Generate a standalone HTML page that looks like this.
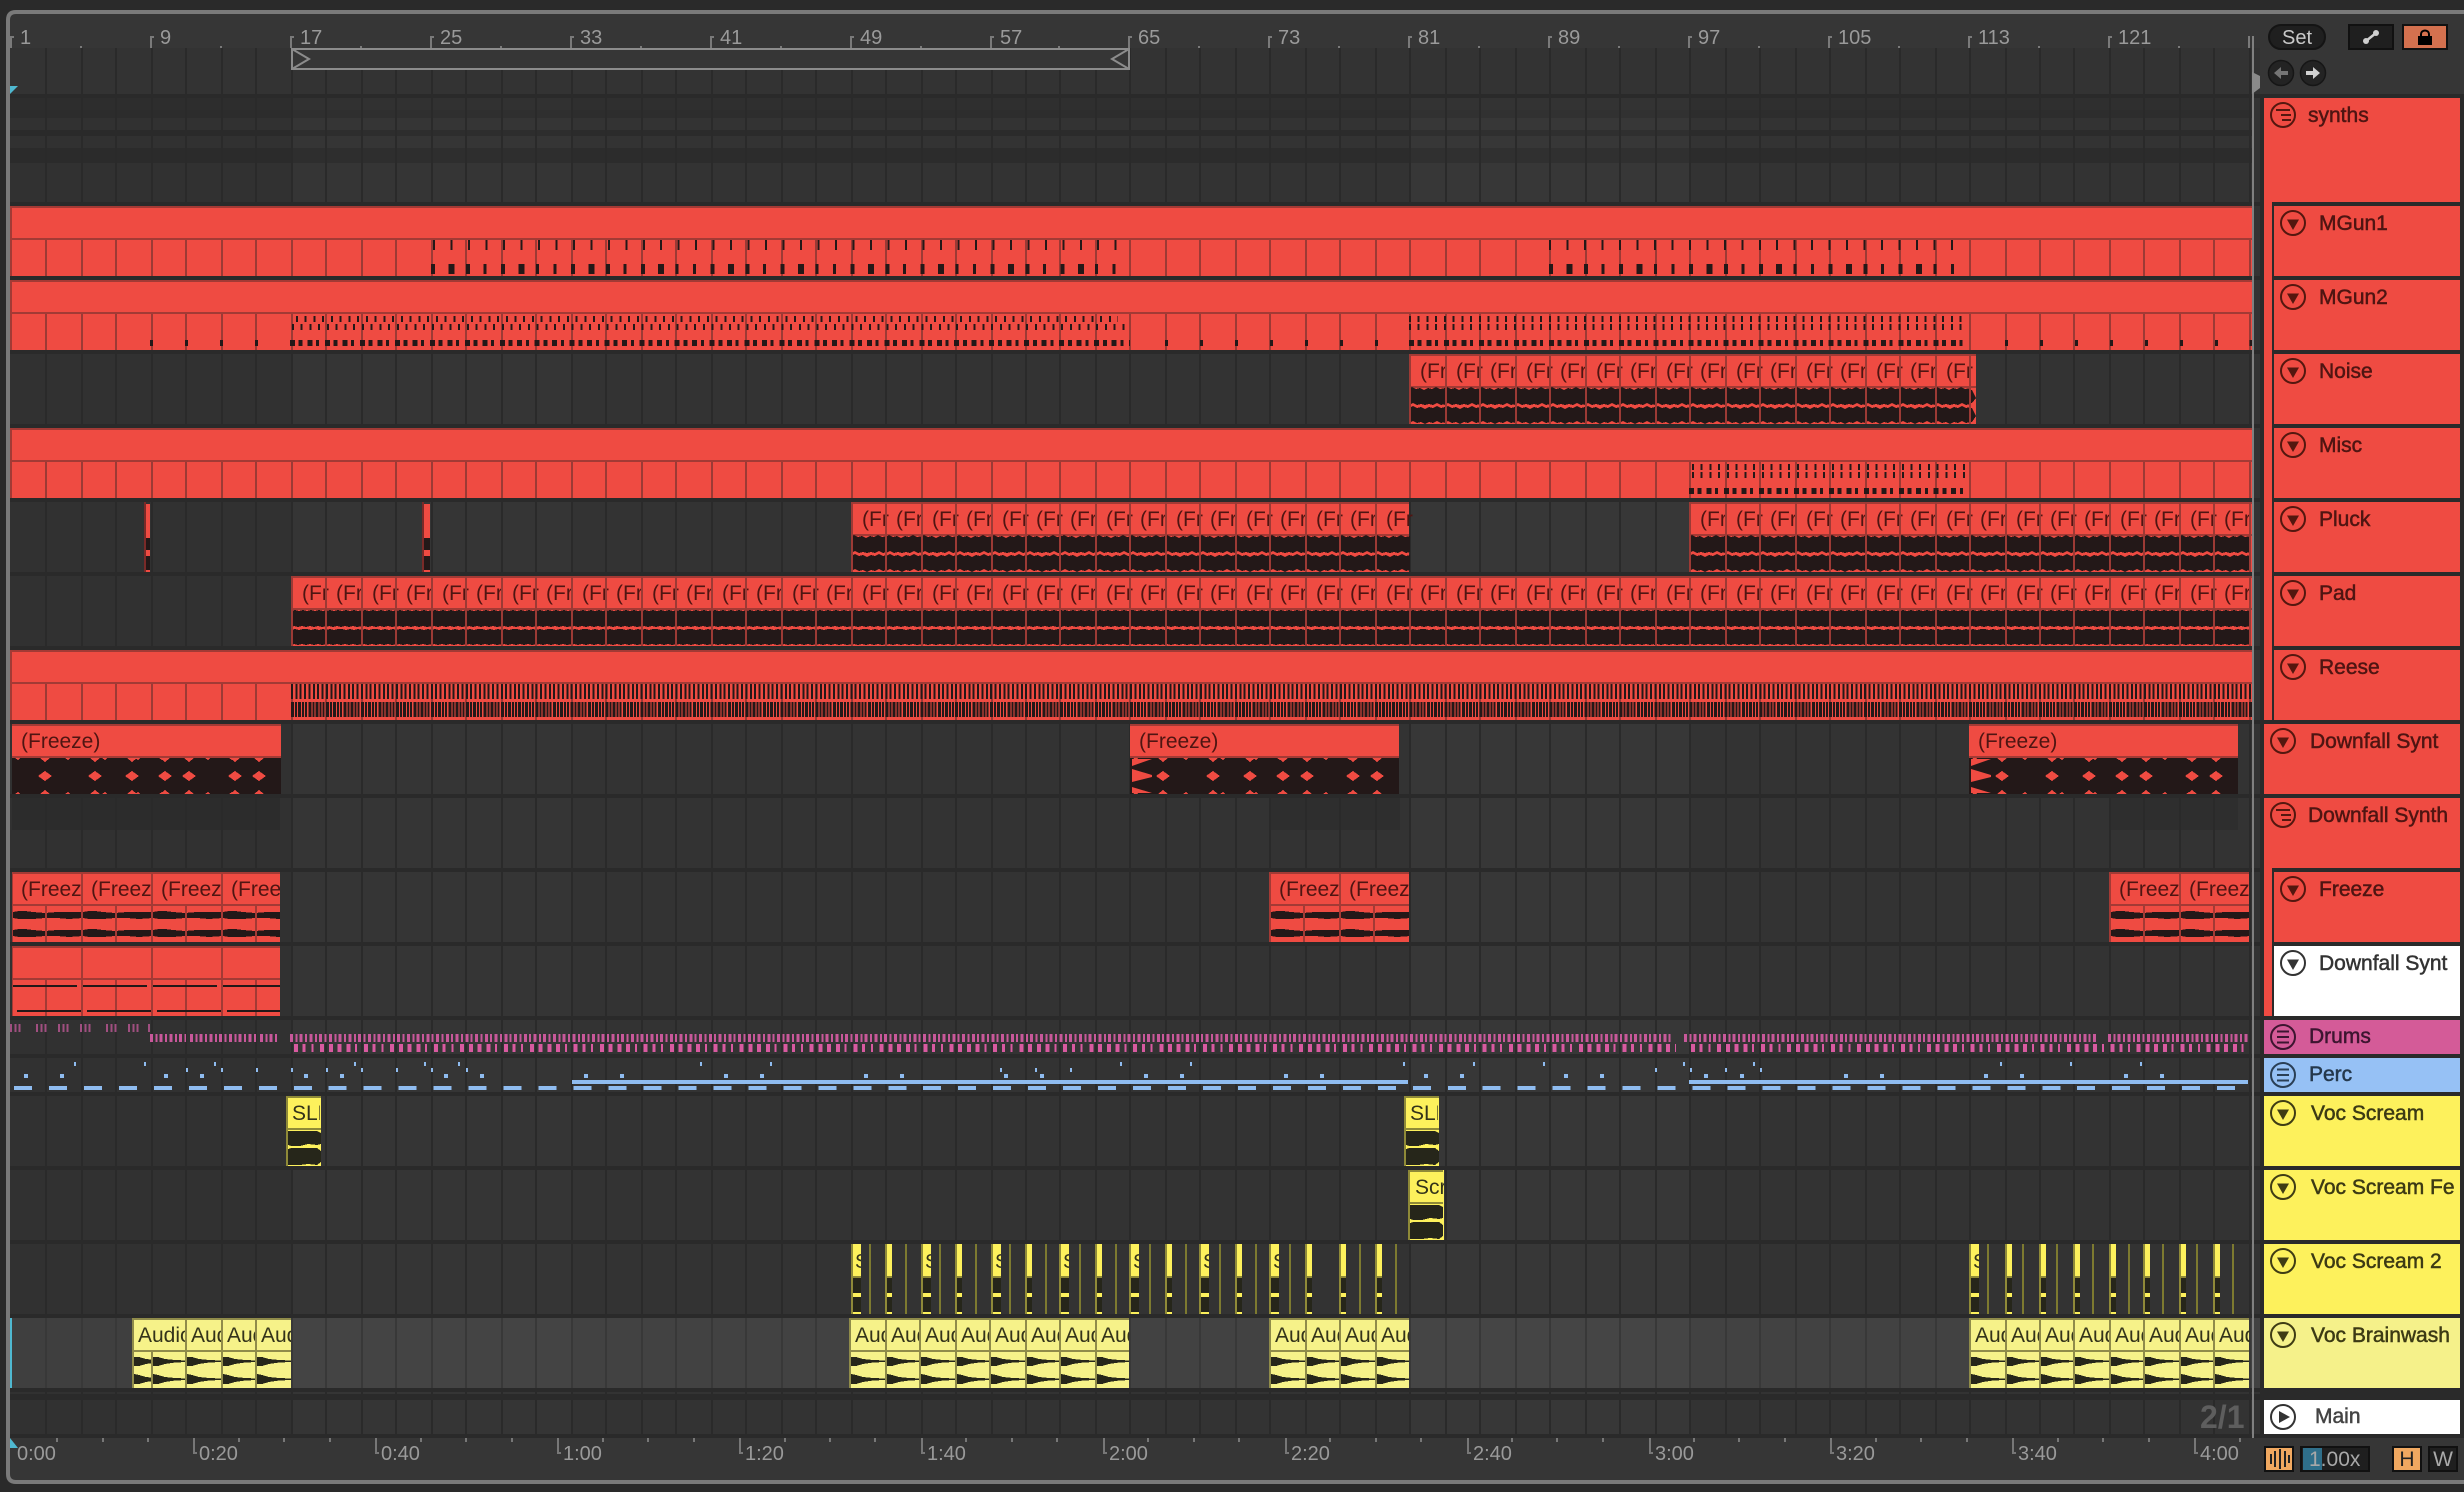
<!DOCTYPE html>
<html><head><meta charset="utf-8"><title>Arrangement</title>
<style>
html,body{margin:0;padding:0;background:#2a2a2a}
svg{display:block}
text{font-family:"Liberation Sans",sans-serif;font-size:20px}
.r{fill:#ef4b42}.rm{fill:#a33a35}
.t text{fill:#4f1512;font-size:21px}
.y text{font-size:21px}
.rl text{fill:#9a9a9a}
.h text{font-size:21px;stroke-width:.5px}
.n{fill:none;stroke:#241818}
.ic{shape-rendering:geometricPrecision}
</style></head><body>
<svg xmlns="http://www.w3.org/2000/svg" width="2464" height="1492" viewBox="0 0 2464 1492" shape-rendering="crispEdges">
<defs>
<path id="gl" fill="none" stroke-width="2" d="M46 48V1434M82 48V1434M116 48V1434M152 48V1434M186 48V1434M222 48V1434M256 48V1434M292 48V1434M326 48V1434M362 48V1434M396 48V1434M432 48V1434M466 48V1434M502 48V1434M536 48V1434M572 48V1434M606 48V1434M642 48V1434M676 48V1434M712 48V1434M746 48V1434M782 48V1434M816 48V1434M852 48V1434M886 48V1434M922 48V1434M956 48V1434M992 48V1434M1026 48V1434M1060 48V1434M1096 48V1434M1130 48V1434M1166 48V1434M1200 48V1434M1236 48V1434M1270 48V1434M1306 48V1434M1340 48V1434M1376 48V1434M1410 48V1434M1446 48V1434M1480 48V1434M1516 48V1434M1550 48V1434M1586 48V1434M1620 48V1434M1656 48V1434M1690 48V1434M1726 48V1434M1760 48V1434M1796 48V1434M1830 48V1434M1866 48V1434M1900 48V1434M1936 48V1434M1970 48V1434M2006 48V1434M2040 48V1434M2074 48V1434M2110 48V1434M2144 48V1434M2180 48V1434M2214 48V1434M2250 48V1434"/>
<clipPath id="cc"><rect x="12" y="240" width="2240" height="36"/><rect x="12" y="314" width="2240" height="36"/><rect x="12" y="462" width="2240" height="36"/><rect x="12" y="684" width="2240" height="36"/><rect x="1409" y="354" width="567" height="70"/><rect x="851" y="502" width="558" height="70"/><rect x="1689" y="502" width="563" height="70"/><rect x="291" y="576" width="1961" height="70"/></clipPath>
<clipPath id="cb"><rect x="12" y="1318" width="2240" height="70"/></clipPath>
<g id="rr"><rect x="12" width="2240" height="70" class="r"/><rect x="10" width="2242" height="2" class="rm"/><rect x="10" width="2" height="70" class="rm"/><rect x="12" y="32" width="2240" height="2" class="rm"/></g>
<path id="w1" fill="#231818" d="M0 35L4 34 8 35 12 34 16 35 20 34 24 35 28 34 32 35 36 34V50L31 51 27 50 23 51 19 50 15 51 11 50 7 51 3 50 0 51ZM0 54L4 53 8 54 12 53 16 53 20 54 24 53 28 54 32 53 36 54V68L31 69 27 68 23 69 19 68 15 69 11 68 7 69 3 68 0 69Z"/>
<g id="p4"><use href="#w1"/><use href="#w1" x="35"/><use href="#w1" x="70"/><use href="#w1" x="105"/></g>
<path id="w2" fill="#231818" d="M0 35L3 33 7 35 11 34 15 36 19 34 23 35 27 33 31 35 36 34V50L32 51 28 49 24 51 20 50 16 51 12 50 8 51 4 49 0 51ZM0 54L4 52 8 54 12 53 16 55 20 53 24 54 28 52 32 54 36 53V68L32 69 28 67 24 69 20 68 16 70 12 68 8 69 4 67 0 69Z"/>
<g id="q4"><use href="#w2"/><use href="#w2" x="35"/><use href="#w2" x="70"/><use href="#w2" x="105"/></g>
<path id="dd" class="r" d="M-7 52L0 47 7 52 0 57ZM-5 34H5L0 38ZM-5 70H5L0 66ZM-30 34H-25L-27 36ZM-30 70H-25L-27 68Z"/>
<g id="fz"><rect width="269" height="70" class="r"/><rect width="269" height="2" class="rm"/><rect y="32" width="269" height="2" class="rm"/><rect y="34" width="269" height="36" fill="#231818"/><use href="#dd" x="33"/><use href="#dd" x="83"/><use href="#dd" x="120"/><use href="#dd" x="153"/><use href="#dd" x="177"/><use href="#dd" x="223"/><use href="#dd" x="247"/></g>
<g id="fc"><rect width="72" height="70" class="r"/><rect width="72" height="2" class="rm"/><rect y="32" width="72" height="2" class="rm"/><rect width="2" height="70" class="rm"/><path fill="#231818" d="M2 40L8 39 14 39 22 40 34 41 46 40 58 40 72 40V46L58 47 46 46 34 46 22 47 14 47 8 47 2 46ZM2 58L8 57 14 57 22 58 34 59 46 58 58 58 72 58V64L58 65 46 64 34 64 22 65 14 65 8 65 2 64Z"/><rect x="34" y="34" width="2" height="36" class="rm"/></g>
<g id="dc"><rect width="72" height="70" class="r"/><rect width="72" height="2" class="rm"/><rect y="32" width="72" height="2" class="rm"/><rect width="2" height="70" class="rm"/><rect x="34" y="34" width="2" height="36" class="rm"/><rect x="2" y="39" width="64" height="2" fill="#231818"/><rect x="6" y="64" width="66" height="2" fill="#231818"/></g>
<g id="au"><rect width="36" height="70" fill="#f6f289"/><rect width="36" height="2" fill="#8f8b4a"/><rect width="2" height="70" fill="#8f8b4a"/><rect y="32" width="36" height="2" fill="#8f8b4a"/><path fill="#26261a" d="M2 39L7 39 14 41 24 42 36 42.5V44L24 44.500 14 46 7 48 2 48ZM2 56L7 57 14 59 24 60 36 60.500V62L24 62.500 14 64 7 66 2 66Z"/></g>
<g id="nw"><rect width="10" height="70" fill="#fdf15c"/><rect width="2" height="70" fill="#8f8a38"/><rect x="2" y="34" width="8" height="15" fill="#26261a"/><rect x="2" y="53" width="8" height="15" fill="#26261a"/><rect x="2" y="32" width="8" height="2" fill="#8f8a38"/></g>
<g id="nn"><rect width="7" height="70" fill="#fdf15c"/><rect width="2" height="70" fill="#8f8a38"/><rect x="2" y="34" width="5" height="15" fill="#26261a"/><rect x="2" y="53" width="5" height="15" fill="#26261a"/><rect x="2" y="32" width="5" height="2" fill="#8f8a38"/></g>
<g id="sl"><rect width="35" height="70" fill="#fdf15c"/><rect width="35" height="2" fill="#8f8a38"/><rect width="2" height="70" fill="#8f8a38"/><rect y="32" width="35" height="2" fill="#8f8a38"/><path fill="#26261a" d="M2 35H31L35 37V48L31 49 22 48 14 50H5L2 49ZM2 53L5 52H31L35 55V66L31 69 22 68 14 69H2Z"/></g>
<g id="fo" class="ic"><circle r="12" fill="none" stroke="currentColor" stroke-width="2"/><path fill="currentColor" d="M-6 -3.500H6L0 7Z"/></g>
<g id="g1" class="ic"><circle r="12" fill="none" stroke="currentColor" stroke-width="2"/><path fill="none" stroke="currentColor" stroke-width="2" d="M-7 -5H7M-2 0H8M-1 5H8"/></g>
<g id="g2" class="ic"><circle r="12" fill="none" stroke="currentColor" stroke-width="2"/><path fill="none" stroke="currentColor" stroke-width="2" d="M-6 -5.500H6M-6 0H6M-6 5.500H6"/></g>
<clipPath id="ca"><rect x="132" y="1318" width="159" height="70"/><rect x="849" y="1318" width="280" height="70"/><rect x="1269" y="1318" width="140" height="70"/><rect x="1969" y="1318" width="281" height="70"/></clipPath>
<clipPath id="cf"><rect x="12" y="872" width="268" height="70"/><rect x="1269" y="872" width="140" height="70"/><rect x="2109" y="872" width="140" height="70"/><rect x="12" y="946" width="268" height="70"/></clipPath>
</defs>

<rect width="2464" height="1492" fill="#2a2a2a"/>
<path fill="#363636" d="M2464 12H16Q8 12 8 20V1474Q8 1482 16 1482H2464Z"/>
<!-- lanes -->
<rect x="10" y="48" width="2250" height="1386" fill="#333"/>
<rect x="10" y="1318" width="2250" height="70" fill="#424242"/>
<rect x="10" y="98" width="281" height="1336" fill="#000" opacity=".03"/>
<rect x="291" y="98" width="280" height="1336" fill="#fff" opacity=".01"/>
<rect x="1409" y="98" width="280" height="1336" fill="#fff" opacity=".018"/>
<rect x="2260" y="94" width="204" height="1344" fill="#2a2a2a"/>
<!-- summaries -->
<g fill="#000">
<rect x="10" y="98" width="2242" height="12" opacity=".07"/><rect x="10" y="110" width="2242" height="8" opacity=".1"/><rect x="10" y="130" width="2242" height="6" opacity=".14"/><rect x="10" y="148" width="2242" height="15" opacity=".12"/>
<rect x="12" y="798" width="268" height="32" opacity=".09"/><rect x="1269" y="798" width="131" height="32" opacity=".09"/><rect x="2109" y="798" width="129" height="32" opacity=".09"/>
</g>
<use href="#gl" stroke="#2a2a2a"/>
<use href="#gl" stroke="#383838" clip-path="url(#cb)"/>
<!-- separators -->
<path fill="none" stroke="#2a2a2a" stroke-width="4" d="M10 96H2260M10 204H2260M10 278H2260M10 352H2260M10 426H2260M10 500H2260M10 574H2260M10 648H2260M10 722H2260M10 796H2260M10 870H2260M10 944H2260M10 1018H2260M10 1056H2260M10 1094H2260M10 1168H2260M10 1242H2260M10 1316H2260M10 1390H2260M10 1436H2260"/>
<rect x="10" y="1394" width="2250" height="6" fill="#2a2a2a"/>
<rect x="10" y="1318" width="2" height="70" fill="#4fb8d0"/>

<!-- frame -->
<path fill="none" stroke="#7a7a7a" stroke-width="4" class="ic" d="M2464 12H16Q8 12 8 20V1474Q8 1482 16 1482H2464"/>

<!-- loop brace -->
<rect x="291" y="48" width="839" height="22" fill="#363636"/>
<path fill="none" stroke="#8c8c8c" stroke-width="2" d="M291 49H1130M291 69H1130M292 49V69M1129 49V69"/>
<g class="ic"><path fill="none" stroke="#8c8c8c" stroke-width="2" d="M292 49L309 59 292 69M1129 49L1112 59 1129 69"/></g>
<path class="ic" fill="#4fb8d0" d="M10 86H18L10 94Z"/>

<!-- red full rows -->
<use href="#rr" y="206"/><use href="#rr" y="280"/><use href="#rr" y="428"/><use href="#rr" y="650"/>

<!-- clips audio rows -->
<rect x="1409" y="354" width="567" height="70" class="r"/>
<rect x="851" y="502" width="558" height="70" class="r"/>
<rect x="1689" y="502" width="563" height="70" class="r"/>
<rect x="291" y="576" width="1961" height="70" class="r"/>
<path fill="none" stroke="#a33a35" stroke-width="2" d="M1409 355H1976M1409 387H1976M851 503H1409M851 535H1409M1689 503H2252M1689 535H2252M291 577H2252M291 609H2252"/>
<use href="#q4" x="1409" y="354"/><use href="#q4" x="1549" y="354"/><use href="#q4" x="1689" y="354"/><use href="#q4" x="1829" y="354"/><path fill="#231818" d="M1969 390H1972L1976 398 1972 403H1969ZM1969 408H1972L1976 416 1972 422H1969Z"/>
<use href="#q4" x="851" y="502"/><use href="#q4" x="991" y="502"/><use href="#q4" x="1129" y="502"/><use href="#q4" x="1269" y="502"/>
<use href="#q4" x="1689" y="502"/><use href="#q4" x="1829" y="502"/><use href="#q4" x="1969" y="502"/><use href="#q4" x="2109" y="502"/>
<use href="#p4" x="291" y="576"/><use href="#p4" x="431" y="576"/><use href="#p4" x="571" y="576"/><use href="#p4" x="711" y="576"/><use href="#p4" x="851" y="576"/><use href="#p4" x="991" y="576"/><use href="#p4" x="1129" y="576"/><use href="#p4" x="1269" y="576"/><use href="#p4" x="1409" y="576"/><use href="#p4" x="1549" y="576"/><use href="#p4" x="1689" y="576"/><use href="#p4" x="1829" y="576"/><use href="#p4" x="1969" y="576"/><use href="#p4" x="2109" y="576"/>

<g class="t">
<text x="1420" y="378">(Fr</text><text x="1456" y="378">(Fr</text><text x="1490" y="378">(Fr</text><text x="1526" y="378">(Fr</text><text x="1560" y="378">(Fr</text><text x="1596" y="378">(Fr</text><text x="1630" y="378">(Fr</text><text x="1666" y="378">(Fr</text><text x="1700" y="378">(Fr</text><text x="1736" y="378">(Fr</text><text x="1770" y="378">(Fr</text><text x="1806" y="378">(Fr</text><text x="1840" y="378">(Fr</text><text x="1876" y="378">(Fr</text><text x="1910" y="378">(Fr</text><text x="1946" y="378">(Fr</text>
<text x="862" y="526">(Fr</text><text x="896" y="526">(Fr</text><text x="932" y="526">(Fr</text><text x="966" y="526">(Fr</text><text x="1002" y="526">(Fr</text><text x="1036" y="526">(Fr</text><text x="1070" y="526">(Fr</text><text x="1106" y="526">(Fr</text><text x="1140" y="526">(Fr</text><text x="1176" y="526">(Fr</text><text x="1210" y="526">(Fr</text><text x="1246" y="526">(Fr</text><text x="1280" y="526">(Fr</text><text x="1316" y="526">(Fr</text><text x="1350" y="526">(Fr</text><text x="1386" y="526">(Fr</text>
<text x="1700" y="526">(Fr</text><text x="1736" y="526">(Fr</text><text x="1770" y="526">(Fr</text><text x="1806" y="526">(Fr</text><text x="1840" y="526">(Fr</text><text x="1876" y="526">(Fr</text><text x="1910" y="526">(Fr</text><text x="1946" y="526">(Fr</text><text x="1980" y="526">(Fr</text><text x="2016" y="526">(Fr</text><text x="2050" y="526">(Fr</text><text x="2084" y="526">(Fr</text><text x="2120" y="526">(Fr</text><text x="2154" y="526">(Fr</text><text x="2190" y="526">(Fr</text><text x="2224" y="526">(Fr</text>
<text x="302" y="600">(Fr</text><text x="336" y="600">(Fr</text><text x="372" y="600">(Fr</text><text x="406" y="600">(Fr</text><text x="442" y="600">(Fr</text><text x="476" y="600">(Fr</text><text x="512" y="600">(Fr</text><text x="546" y="600">(Fr</text><text x="582" y="600">(Fr</text><text x="616" y="600">(Fr</text><text x="652" y="600">(Fr</text><text x="686" y="600">(Fr</text><text x="722" y="600">(Fr</text><text x="756" y="600">(Fr</text><text x="792" y="600">(Fr</text><text x="826" y="600">(Fr</text><text x="862" y="600">(Fr</text><text x="896" y="600">(Fr</text><text x="932" y="600">(Fr</text><text x="966" y="600">(Fr</text><text x="1002" y="600">(Fr</text><text x="1036" y="600">(Fr</text><text x="1070" y="600">(Fr</text><text x="1106" y="600">(Fr</text><text x="1140" y="600">(Fr</text><text x="1176" y="600">(Fr</text><text x="1210" y="600">(Fr</text><text x="1246" y="600">(Fr</text><text x="1280" y="600">(Fr</text><text x="1316" y="600">(Fr</text><text x="1350" y="600">(Fr</text><text x="1386" y="600">(Fr</text><text x="1420" y="600">(Fr</text><text x="1456" y="600">(Fr</text><text x="1490" y="600">(Fr</text><text x="1526" y="600">(Fr</text><text x="1560" y="600">(Fr</text><text x="1596" y="600">(Fr</text><text x="1630" y="600">(Fr</text><text x="1666" y="600">(Fr</text><text x="1700" y="600">(Fr</text><text x="1736" y="600">(Fr</text><text x="1770" y="600">(Fr</text><text x="1806" y="600">(Fr</text><text x="1840" y="600">(Fr</text><text x="1876" y="600">(Fr</text><text x="1910" y="600">(Fr</text><text x="1946" y="600">(Fr</text><text x="1980" y="600">(Fr</text><text x="2016" y="600">(Fr</text><text x="2050" y="600">(Fr</text><text x="2084" y="600">(Fr</text><text x="2120" y="600">(Fr</text><text x="2154" y="600">(Fr</text><text x="2190" y="600">(Fr</text><text x="2224" y="600">(Fr</text>
</g>
<use href="#gl" stroke="#9c3a35" clip-path="url(#cc)"/>

<!-- tiny pluck clips -->
<rect x="144" y="502" width="2" height="70" fill="#7a2a28"/><rect x="146" y="504" width="4" height="68" class="r"/><rect x="146" y="538" width="4" height="12" fill="#231818"/><rect x="146" y="556" width="4" height="14" fill="#231818"/>
<rect x="422" y="502" width="2" height="70" fill="#7a2a28"/><rect x="424" y="504" width="6" height="68" class="r"/><rect x="424" y="538" width="6" height="12" fill="#231818"/><rect x="424" y="556" width="6" height="14" fill="#231818"/>

<!-- notes MGun1 -->
<path class="n" stroke-width="10" stroke-dasharray="2 15.48" d="M433 245H1118M1549 245H1958"/>
<path class="n" stroke-width="10" stroke-dasharray="4 13.48 6 11.48 4 13.48 3 14.48 4 13.48 6 11.48 3 14.48 3 14.48" d="M431 269H1118M1549 269H1958"/>
<!-- notes MGun2 + Misc -->
<path class="n" stroke-width="6" stroke-dasharray="2 6.74" d="M296 319H1118M1409 319H1968M292 327H1130M1409 327H1968M1692 467H1968M1692 475H1968"/>
<path class="n" stroke-width="6" stroke-dasharray="5 3.74 4 4.74 5 3.74 3 5.74" d="M290 343H1130M1409 343H1968M1689 491H1968"/>
<path class="n" stroke-width="6" stroke-dasharray="3 31.96" d="M150 343H290M1165 343H1400M2005 343H2252"/>
<!-- notes Reese -->
<path class="n" stroke-width="15" stroke-dasharray="2 2.37" d="M291 691.500H2252"/>
<path class="n" stroke-width="15" stroke-dasharray="3 1 2 1 3 1 2 1 2 1.48" d="M291 709.500H2252"/>

<!-- Downfall Synt freeze -->
<use href="#fz" x="12" y="724"/><use href="#fz" x="1130" y="724"/><use href="#fz" x="1969" y="724"/>
<g class="r ic"><path d="M1132 759H1152L1132 766ZM1132 769L1152 775V777L1132 782ZM1132 787L1152 793H1132Z"/><path d="M1971 759H1991L1971 766ZM1971 769L1991 775V777L1971 782ZM1971 787L1991 793H1971Z"/></g>
<g class="t"><text x="21" y="748">(Freeze)</text><text x="1139" y="748">(Freeze)</text><text x="1978" y="748">(Freeze)</text></g>

<!-- Freeze & Downfall clips -->
<g clip-path="url(#cf)"><g class="t">
<use href="#fc" x="11" y="872"/><text x="21" y="896">(Freeze)</text>
<use href="#fc" x="81" y="872"/><text x="91" y="896">(Freeze)</text>
<use href="#fc" x="151" y="872"/><text x="161" y="896">(Freeze)</text>
<use href="#fc" x="221" y="872"/><text x="231" y="896">(Freeze)</text>
<use href="#fc" x="1269" y="872"/><text x="1279" y="896">(Freeze)</text>
<use href="#fc" x="1339" y="872"/><text x="1349" y="896">(Freeze)</text>
<use href="#fc" x="2109" y="872"/><text x="2119" y="896">(Freeze)</text>
<use href="#fc" x="2179" y="872"/><text x="2189" y="896">(Freeze)</text>
</g>
<use href="#dc" x="11" y="946"/><use href="#dc" x="81" y="946"/><use href="#dc" x="151" y="946"/><use href="#dc" x="221" y="946"/>
</g>

<!-- Drums -->
<path fill="none" stroke="#a04f80" stroke-width="8" stroke-dasharray="2 2.37" d="M10 1028H21M36 1028H47M58 1028H69M80 1028H91M106 1028H117M128 1028H139M148 1028H150"/>
<path fill="none" stroke="#c8589a" stroke-width="8" stroke-dasharray="3 2.37 2 2.37" d="M150 1038H186M190 1038H256M260 1038H278M290 1038H1672M1684 1038H2096M2108 1038H2248"/>
<path fill="none" stroke="#d85aa0" stroke-width="8" stroke-dasharray="4 4.74 3 5.74 2 6.74 4 4.74 4 4.74 4 4.74 4 4.74 2 6.74" d="M294 1048H1676M1691 1048H2246"/>
<!-- Perc -->
<g fill="none" stroke="#8fbcf0" stroke-width="4">
<path stroke-dasharray="18 16.97" d="M14 1088H2250"/>
<path stroke-dasharray="4 32 4 100" d="M24 1076H2250"/>
<path stroke-dasharray="2 68" d="M74 1064H220M354 1064H430M458 1064H460M700 1064H840M1120 1064H1260M1403 1064H1545M1683 1064H1755M2000 1064H2200"/>
<path stroke-dasharray="2 32.97" d="M186 1070H470M1000 1070H1100M1655 1070H1765"/>
<path d="M572 1082H1408M1689 1082H2248"/>
</g>

<!-- Voc Scream -->
<use href="#sl" x="286" y="1096"/><use href="#sl" x="1404" y="1096"/><use href="#sl" x="1408" y="1170"/><rect x="1443" y="1170" width="1" height="70" fill="#fdf15c"/>
<g fill="#33331a" class="y"><svg x="286" y="1096" width="34" height="70"><text x="6" y="24">SLK</text></svg><svg x="1404" y="1096" width="34" height="70"><text x="6" y="24">SLK</text></svg><svg x="1408" y="1170" width="36" height="70"><text x="7" y="24">Scream</text></svg></g>

<!-- Voc Scream 2 thin lines -->
<path fill="none" stroke="#7d7a30" stroke-width="2" d="M870 1244V1314M906 1244V1314M940 1244V1314M976 1244V1314M1010 1244V1314M1046 1244V1314M1080 1244V1314M1116 1244V1314M1150 1244V1314M1186 1244V1314M1220 1244V1314M1256 1244V1314M1290 1244V1314M1360 1244V1314M1396 1244V1314M1988 1244V1314M2023 1244V1314M2057 1244V1314M2093 1244V1314M2129 1244V1314M2163 1244V1314M2197 1244V1314M2233 1244V1314"/>
<use href="#nw" x="851" y="1244"/><use href="#nn" x="885" y="1244"/><use href="#nw" x="921" y="1244"/><use href="#nn" x="955" y="1244"/><use href="#nw" x="991" y="1244"/><use href="#nn" x="1025" y="1244"/><use href="#nw" x="1059" y="1244"/><use href="#nn" x="1095" y="1244"/><use href="#nw" x="1129" y="1244"/><use href="#nn" x="1165" y="1244"/><use href="#nw" x="1199" y="1244"/><use href="#nn" x="1235" y="1244"/><use href="#nw" x="1269" y="1244"/><use href="#nn" x="1305" y="1244"/><use href="#nn" x="1339" y="1244"/><use href="#nn" x="1375" y="1244"/>
<use href="#nw" x="1969" y="1244"/><use href="#nn" x="2005" y="1244"/><use href="#nn" x="2039" y="1244"/><use href="#nn" x="2073" y="1244"/><use href="#nn" x="2109" y="1244"/><use href="#nn" x="2143" y="1244"/><use href="#nn" x="2179" y="1244"/><use href="#nn" x="2213" y="1244"/>
<g fill="#33331a"><svg x="853" y="1244" width="8" height="32"><text x="2" y="24">S</text></svg><svg x="923" y="1244" width="8" height="32"><text x="2" y="24">S</text></svg><svg x="993" y="1244" width="8" height="32"><text x="2" y="24">S</text></svg><svg x="1061" y="1244" width="8" height="32"><text x="2" y="24">S</text></svg><svg x="1131" y="1244" width="8" height="32"><text x="2" y="24">S</text></svg><svg x="1201" y="1244" width="8" height="32"><text x="2" y="24">S</text></svg><svg x="1271" y="1244" width="8" height="32"><text x="2" y="24">S</text></svg><svg x="1971" y="1244" width="8" height="32"><text x="2" y="24">S</text></svg></g>

<!-- Voc Brainwash -->
<g clip-path="url(#ca)"><g fill="#33331a" class="y">
<use href="#au" x="132" y="1318"/><use href="#au" x="151" y="1318"/><rect x="150" y="1320" width="6" height="30" fill="#f6f289"/><text x="138" y="1342">Audio</text>
<use href="#au" x="185" y="1318"/><text x="191" y="1342">Aud</text><use href="#au" x="221" y="1318"/><text x="227" y="1342">Aud</text><use href="#au" x="255" y="1318"/><text x="261" y="1342">Aud</text>
<use href="#au" x="849" y="1318"/><text x="855" y="1342">Aud</text><use href="#au" x="885" y="1318"/><text x="891" y="1342">Aud</text><use href="#au" x="919" y="1318"/><text x="925" y="1342">Aud</text><use href="#au" x="955" y="1318"/><text x="961" y="1342">Aud</text><use href="#au" x="989" y="1318"/><text x="995" y="1342">Aud</text><use href="#au" x="1025" y="1318"/><text x="1031" y="1342">Aud</text><use href="#au" x="1059" y="1318"/><text x="1065" y="1342">Aud</text><use href="#au" x="1095" y="1318"/><text x="1101" y="1342">Aud</text>
<use href="#au" x="1269" y="1318"/><text x="1275" y="1342">Aud</text><use href="#au" x="1305" y="1318"/><text x="1311" y="1342">Aud</text><use href="#au" x="1339" y="1318"/><text x="1345" y="1342">Aud</text><use href="#au" x="1375" y="1318"/><text x="1381" y="1342">Aud</text>
<use href="#au" x="1969" y="1318"/><text x="1975" y="1342">Aud</text><use href="#au" x="2005" y="1318"/><text x="2011" y="1342">Aud</text><use href="#au" x="2039" y="1318"/><text x="2045" y="1342">Aud</text><use href="#au" x="2073" y="1318"/><text x="2079" y="1342">Aud</text><use href="#au" x="2109" y="1318"/><text x="2115" y="1342">Aud</text><use href="#au" x="2143" y="1318"/><text x="2149" y="1342">Aud</text><use href="#au" x="2179" y="1318"/><text x="2185" y="1342">Aud</text><use href="#au" x="2213" y="1318"/><text x="2219" y="1342">Aud</text>
</g></g>

<!-- 2/1 -->
<svg x="2190" y="1400" width="62" height="34"><text x="10" y="28" style="font-size:32px;font-weight:bold" fill="#5e5e5e">2/1</text></svg>

<!-- top ruler -->
<path fill="none" stroke="#7a7a7a" stroke-width="2" d="M11 37H14M11 36V48M151 37H154M151 36V48M291 37H294M291 36V48M431 37H434M431 36V48M571 37H574M571 36V48M711 37H714M711 36V48M851 37H854M851 36V48M991 37H994M991 36V48M1129 37H1132M1129 36V48M1269 37H1272M1269 36V48M1409 37H1412M1409 36V48M1549 37H1552M1549 36V48M1689 37H1692M1689 36V48M1829 37H1832M1829 36V48M1969 37H1972M1969 36V48M2109 37H2112M2109 36V48M2249 36V48M81 46V48M221 46V48M361 46V48M501 46V48M641 46V48M781 46V48M921 46V48M1059 46V48M1199 46V48M1339 46V48M1479 46V48M1619 46V48M1759 46V48M1899 46V48M2039 46V48M2179 46V48"/>
<g class="rl"><text x="20" y="44">1</text><text x="160" y="44">9</text><text x="300" y="44">17</text><text x="440" y="44">25</text><text x="580" y="44">33</text><text x="720" y="44">41</text><text x="860" y="44">49</text><text x="1000" y="44">57</text><text x="1138" y="44">65</text><text x="1278" y="44">73</text><text x="1418" y="44">81</text><text x="1558" y="44">89</text><text x="1698" y="44">97</text><text x="1838" y="44">105</text><text x="1978" y="44">113</text><text x="2118" y="44">121</text></g>

<!-- bottom ruler -->
<path fill="none" stroke="#777" stroke-width="2" d="M57 1438V1442M103 1438V1442M148 1438V1442M239 1438V1442M284 1438V1442M330 1438V1442M421 1438V1442M466 1438V1442M512 1438V1442M603 1438V1442M648 1438V1442M694 1438V1442M785 1438V1442M830 1438V1442M875 1438V1442M966 1438V1442M1012 1438V1442M1057 1438V1442M1148 1438V1442M1194 1438V1442M1239 1438V1442M1330 1438V1442M1376 1438V1442M1421 1438V1442M1512 1438V1442M1557 1438V1442M1603 1438V1442M1694 1438V1442M1739 1438V1442M1785 1438V1442M1876 1438V1442M1921 1438V1442M1967 1438V1442M2058 1438V1442M2103 1438V1442M2149 1438V1442M2240 1438V1442M194 1438V1453H197M376 1438V1453H379M558 1438V1453H561M740 1438V1453H743M922 1438V1453H925M1104 1438V1453H1107M1286 1438V1453H1289M1468 1438V1453H1471M1650 1438V1453H1653M1831 1438V1453H1834M2013 1438V1453H2016M2195 1438V1453H2198"/>
<g class="rl"><text x="17" y="1460">0:00</text><text x="199" y="1460">0:20</text><text x="381" y="1460">0:40</text><text x="563" y="1460">1:00</text><text x="745" y="1460">1:20</text><text x="927" y="1460">1:40</text><text x="1109" y="1460">2:00</text><text x="1291" y="1460">2:20</text><text x="1473" y="1460">2:40</text><text x="1655" y="1460">3:00</text><text x="1836" y="1460">3:20</text><text x="2018" y="1460">3:40</text><text x="2200" y="1460">4:00</text></g>
<path class="ic" fill="#4fb8d0" d="M10 1438L18 1448H10Z"/>

<!-- playhead bar + handle -->
<rect x="2252" y="36" width="2" height="1402" fill="#808080"/>
<path class="ic" fill="#8a8a8a" d="M2252 72L2260 76V88L2252 94Z"/>

<!-- right panel rows -->
<g>
<rect x="2264" y="98" width="196" height="104" fill="#ef4b42"/>
<rect x="2264" y="202" width="8" height="518" fill="#ef4b42"/>
<rect x="2274" y="206" width="186" height="70" fill="#ef4b42"/><rect x="2274" y="280" width="186" height="70" fill="#ef4b42"/><rect x="2274" y="354" width="186" height="70" fill="#ef4b42"/><rect x="2274" y="428" width="186" height="70" fill="#ef4b42"/><rect x="2274" y="502" width="186" height="70" fill="#ef4b42"/><rect x="2274" y="576" width="186" height="70" fill="#ef4b42"/><rect x="2274" y="650" width="186" height="70" fill="#ef4b42"/>
<rect x="2264" y="724" width="196" height="70" fill="#ef4b42"/>
<rect x="2264" y="798" width="196" height="70" fill="#ef4b42"/>
<rect x="2264" y="868" width="8" height="148" fill="#ef4b42"/>
<rect x="2274" y="872" width="186" height="70" fill="#ef4b42"/>
<rect x="2274" y="946" width="186" height="70" fill="#fff"/>
<rect x="2264" y="1020" width="196" height="34" fill="#d45b98"/>
<rect x="2264" y="1058" width="196" height="34" fill="#96c1f5"/>
<rect x="2264" y="1096" width="196" height="70" fill="#fdf15c"/><rect x="2264" y="1170" width="196" height="70" fill="#fdf15c"/><rect x="2264" y="1244" width="196" height="70" fill="#fdf15c"/>
<rect x="2264" y="1318" width="196" height="70" fill="#f5f18a"/>
<rect x="2264" y="1400" width="196" height="34" fill="#fff"/>
</g>
<g style="color:#54170f">
<use href="#g1" x="2283" y="115"/><use href="#fo" x="2293" y="223"/><use href="#fo" x="2293" y="297"/><use href="#fo" x="2293" y="371"/><use href="#fo" x="2293" y="445"/><use href="#fo" x="2293" y="519"/><use href="#fo" x="2293" y="593"/><use href="#fo" x="2293" y="667"/><use href="#fo" x="2283" y="741"/><use href="#g1" x="2283" y="815"/><use href="#fo" x="2293" y="889"/>
</g>
<use href="#fo" x="2293" y="963" style="color:#333"/>
<use href="#g2" x="2283" y="1037" style="color:#3d1530"/>
<use href="#g2" x="2283" y="1075" style="color:#2a3f55"/>
<g style="color:#3f3c14"><use href="#fo" x="2283" y="1113"/><use href="#fo" x="2283" y="1187"/><use href="#fo" x="2283" y="1261"/><use href="#fo" x="2283" y="1335"/></g>
<g class="ic"><circle cx="2283" cy="1417" r="12" fill="none" stroke="#333" stroke-width="2"/><path fill="#333" d="M2279 1411L2290 1417 2279 1423Z"/></g>

<svg x="2264" y="0" width="196" height="1492"><g class="h" fill="#4f1512" stroke="#4f1512">
<text x="44" y="122">synths</text><text x="55" y="230">MGun1</text><text x="55" y="304">MGun2</text><text x="55" y="378">Noise</text><text x="55" y="452">Misc</text><text x="55" y="526">Pluck</text><text x="55" y="600">Pad</text><text x="55" y="674">Reese</text><text x="46" y="748">Downfall Synt</text><text x="44" y="822">Downfall Synth</text><text x="55" y="896">Freeze</text></g>
<g class="h"><text x="55" y="970" fill="#333" stroke="#333">Downfall Synt</text><text x="45" y="1043" fill="#3d1530" stroke="#3d1530">Drums</text><text x="45" y="1081" fill="#24384c" stroke="#24384c">Perc</text>
<g fill="#3c3a14" stroke="#3c3a14"><text x="47" y="1120">Voc Scream</text><text x="47" y="1194">Voc Scream Fe</text><text x="47" y="1268">Voc Scream 2</text><text x="47" y="1342">Voc Brainwash</text></g>
<text x="51" y="1423" fill="#444" stroke="#444">Main</text></g></svg>

<!-- top right controls -->
<rect x="2269" y="25" width="56" height="24" rx="12" fill="#1f1f1f" stroke="#141414" stroke-width="2" class="ic"/>
<text x="2297" y="44" text-anchor="middle" fill="#c8c8c8">Set</text>
<rect x="2349" y="25" width="44" height="24" fill="#1f1f1f" stroke="#111" stroke-width="2"/>
<g class="ic"><path fill="none" stroke="#cfcfcf" stroke-width="2.500" d="M2366 41L2376 33"/><circle cx="2366" cy="41" r="3" fill="#cfcfcf"/><circle cx="2376" cy="33" r="3" fill="#cfcfcf"/></g>
<rect x="2403" y="25" width="44" height="24" fill="#d4714f" stroke="#111" stroke-width="2"/>
<g class="ic"><rect x="2418" y="36" width="14" height="9" fill="#000"/><path fill="none" stroke="#000" stroke-width="2" d="M2421 36V34A4 3.500 0 0 1 2429 34V36"/>
<circle cx="2281" cy="73" r="12.500" fill="#232323" stroke="#161616" stroke-width="1.500"/><circle cx="2313" cy="73" r="12.500" fill="#232323" stroke="#161616" stroke-width="1.500"/>
<path fill="#757575" d="M2274 73L2281 67V71H2288V75H2281V79Z"/><path fill="#d0d0d0" d="M2320 73L2313 67V71H2306V75H2313V79Z"/></g>

<!-- bottom right controls -->
<rect x="2265" y="1447" width="28" height="24" fill="#f0a860" stroke="#111" stroke-width="2"/>
<path fill="none" stroke="#222" stroke-width="2" d="M2271 1454V1464M2275 1451V1467M2280 1449V1469M2285 1451V1467M2289 1455V1463"/>
<rect x="2301" y="1447" width="68" height="24" fill="#1f1f1f" stroke="#111" stroke-width="2"/>
<rect x="2303" y="1448" width="19" height="22" fill="#2f6f8a"/>
<text x="2309" y="1466" fill="#a8a8a8" style="font-size:21px">1.00x</text>
<rect x="2393" y="1447" width="28" height="24" fill="#f0a860" stroke="#111" stroke-width="2"/>
<text x="2407" y="1466" text-anchor="middle" fill="#222" style="font-size:21px">H</text>
<rect x="2429" y="1447" width="28" height="24" fill="#1f1f1f" stroke="#111" stroke-width="2"/>
<text x="2443" y="1466" text-anchor="middle" fill="#aaa" style="font-size:21px">W</text>
</svg>
</body></html>
